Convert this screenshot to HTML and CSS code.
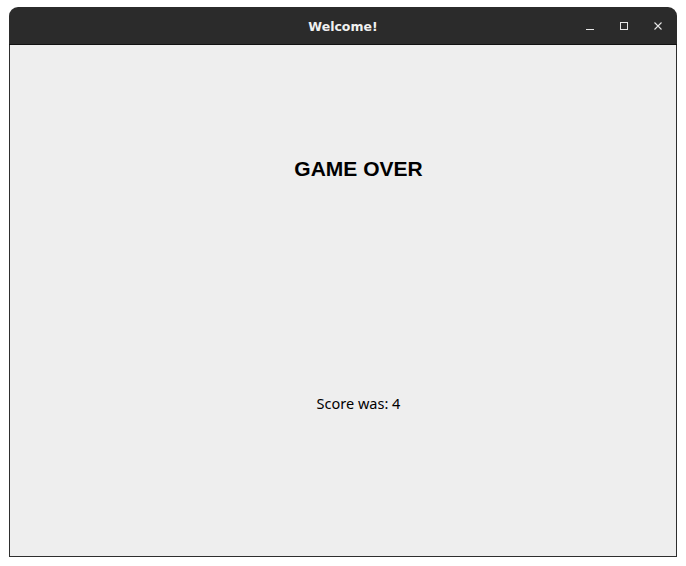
FILE: index.html
```html
<!DOCTYPE html>
<html>
<head>
<meta charset="utf-8">
<link rel="stylesheet" href="styles.css">
</head>
<body>
<div class="window">
  <div class="titlebar">
    <div class="title">Welcome!</div>
    <div class="controls">
      <svg class="ctl" width="10" height="10" viewBox="0 0 10 10"><path d="M1 8.5H9" stroke="#e6e6e6" stroke-width="1"/></svg>
      <svg class="ctl" width="10" height="10" viewBox="0 0 10 10"><rect x="1.5" y="1.5" width="7" height="7" fill="none" stroke="#e6e6e6" stroke-width="1"/></svg>
      <svg class="ctl" width="10" height="10" viewBox="0 0 10 10"><path d="M1.5 1.5L8.5 8.5M8.5 1.5L1.5 8.5" stroke="#e6e6e6" stroke-width="1.1"/></svg>
    </div>
  </div>
  <div class="content">
    <div class="heading">GAME OVER</div>
    <div class="score">Score was: 4</div>
  </div>
</div>
</body>
</html>
```
FILE: styles.css
```css
html, body { margin: 0; padding: 0; background: #ffffff; }
body { padding: 7px 9px 9px 9px; }
.window {
  width: 668px;
  height: 550px;
  box-sizing: border-box;
  display: flex;
  flex-direction: column;
  border-radius: 9px 9px 0 0;
  overflow: hidden;
}
.titlebar {
  height: 37px;
  flex: none;
  background: #2b2b2b;
  border-bottom: 1px solid #111;
  display: flex;
  align-items: center;
  justify-content: center;
  position: relative;
}
.title {
  font-family: "DejaVu Sans", sans-serif;
  font-weight: bold;
  font-size: 12.5px;
  color: #f0f0f0;
  padding-top: 1px;
}
.controls {
  position: absolute;
  right: 14px;
  top: 14px;
  display: flex;
  gap: 24px;
}
.ctl { display: block; }
.content {
  flex: 1;
  background: #eeeeee;
  border: 1px solid #2e2e2e;
  border-top: none;
  display: flex;
  flex-direction: column;
  align-items: center;
  padding-left: 31px;
}
.heading {
  font-family: "Liberation Sans", Arial, sans-serif;
  font-weight: bold;
  font-size: 21px;
  color: #000;
  margin-top: 111px;
  line-height: 26px;
}
.score {
  font-family: "Noto Sans", sans-serif;
  font-size: 14.5px;
  color: #000;
  margin-top: 211px;
  line-height: 20px;
}
```
